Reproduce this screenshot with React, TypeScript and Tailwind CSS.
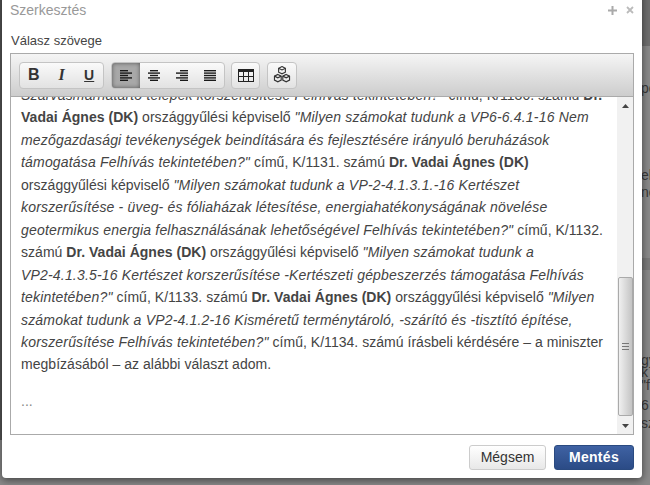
import React from "react";

function AlignIcon({ kind }: { kind: "l" | "c" | "r" | "j" }) {
  const short = { l: [0, 8], c: [2, 8], r: [4, 8], j: [0, 12] };
  const long = { l: [0, 12], c: [0, 12], r: [0, 12], j: [0, 12] };
  const rows = [short, long, short, long, short];
  return (
    <svg width="12" height="11" viewBox="0 0 12 11" fill="#1a1a1a">
      {rows.map((r, i) => (
        <rect key={i} x={r[kind][0]} y={i * 2.4} width={r[kind][1]} height="1.4" />
      ))}
    </svg>
  );
}

const btn = "w-[28px] flex items-center justify-center text-[#333]";
const group = "flex h-[27px] border border-[#c4c4c4] rounded-[4px] bg-gradient-to-b from-[#fafafa] to-[#e2e2e2] overflow-hidden";
const it = "italic text-[14px] tracking-[.18px] leading-none";

function Body() {
  return (
    <div className="mt-[-13px] pl-[10px] text-[14px] leading-[22.45px] text-[#444] whitespace-nowrap tracking-[.03px]">
      <p>
        <i className={it}>Szarvasmarhatartó telepek korszerűsítése Felhívás tekintetében?"</i> című, K/1130. számú <b>Dr.</b><br />
        <b>Vadai Ágnes (DK)</b> országgyűlési képviselő <i className={it}>"Milyen számokat tudunk a VP6-6.4.1-16 Nem</i><br />
        <i className={it}>mezőgazdasági tevékenységek beindítására és fejlesztésére irányuló beruházások</i><br />
        <i className={it}>támogatása Felhívás tekintetében?"</i> című, K/1131. számú <b>Dr. Vadai Ágnes (DK)</b><br />
        országgyűlési képviselő <i className={it}>"Milyen számokat tudunk a VP-2-4.1.3.1.-16 Kertészet</i><br />
        <i className={it}>korszerűsítése - üveg- és fóliaházak létesítése, energiahatékonyságának növelése</i><br />
        <i className={it}>geotermikus energia felhasználásának lehetőségével Felhívás tekintetében?"</i> című, K/1132.<br />
        számú <b>Dr. Vadai Ágnes (DK)</b> országgyűlési képviselő <i className={it}>"Milyen számokat tudunk a</i><br />
        <i className={it}>VP2-4.1.3.5-16 Kertészet korszerűsítése -Kertészeti gépbeszerzés támogatása Felhívás</i><br />
        <i className={it}>tekintetében?"</i> című, K/1133. számú <b>Dr. Vadai Ágnes (DK)</b> országgyűlési képviselő <i className={it}>"Milyen</i><br />
        <i className={it}>számokat tudunk a VP2-4.1.2-16 Kisméretű terménytároló, -szárító és -tisztító építése,</i><br />
        <i className={it}>korszerűsítése Felhívás tekintetében?"</i> című, K/1134. számú írásbeli kérdésére – a miniszter<br />
        megbízásából – az alábbi választ adom.
      </p>
      <p className="mt-[14px] text-[#888]">...</p>
    </div>
  );
}

const bgFragments: [number, string][] = [
  [80, "pe"],
  [167, "eh"],
  [184, "ne"],
  [352, "gy"],
  [364, "k"],
  [377, "\"f"],
  [397, "6"],
  [415, "sz"],
];

export default function App() {
  return (
    <div className="relative w-[650px] h-[485px] overflow-hidden bg-[#8a8a8a] font-['Liberation_Sans',Arial,sans-serif]">
      <div className="absolute left-0 top-0 w-full h-[46px] bg-[#6f6f6f]" />
      <div className="absolute left-0 top-[258px] w-full h-[12px] bg-[#7a7a7a]" />
      {bgFragments.map(([y, t]) => (
        <span key={y} className="absolute left-[641px] text-[14px] leading-[16px] text-[#3a3a3a]" style={{ top: y }}>
          {t}
        </span>
      ))}
      <div className="absolute left-0 top-0 w-[2px] h-[440px] bg-[#555]" />
      <div className="absolute left-[2px] top-[-10px] w-[640px] h-[488px] bg-white rounded-[4px] shadow-[0_2px_8px_rgba(0,0,0,0.55)] flex flex-col">
        <div className="h-[20px] mt-[10px] shrink-0 flex items-center justify-between pl-[8px] pr-[8px]">
          <span className="text-[14px] text-[#999]">Szerkesztés</span>
          <span className="flex items-center gap-[9px] text-[#aaa] leading-none">
            <svg width="9" height="9" stroke="#aaa" strokeWidth="2"><path d="M4.500 0V9M0 4.500H9" /></svg>
            <svg width="8" height="8" stroke="#bbb" strokeWidth="1.800"><path d="M1 1L7 7M7 1L1 7" /></svg>
          </span>
        </div>
        <div className="pl-[9px] text-[13px] text-[#444] mt-[13px] h-[20px] leading-[15px] shrink-0">Válasz szövege</div>
        <div className="ml-[8px] mr-[8px] h-[382px] border border-[#aaa] flex flex-col overflow-hidden shrink-0">
          <div className="relative z-10 h-[43px] shrink-0 bg-gradient-to-b from-[#f5f5f5] to-[#cdcdcd] border-b border-[#aaa] flex items-center pl-[8px]">
            <div className={group + " w-[85px]"}>
              <div className={btn + " font-bold text-[16px]"}>B</div>
              <div className={btn + " font-bold italic text-[16px] font-['Liberation_Serif',serif]"}>I</div>
              <div className={btn + " font-bold underline text-[14px]"}>U</div>
            </div>
            <div className={group + " w-[114px] ml-[7px]"}>
              <div className={btn + " bg-[#a8a8a8] shadow-[inset_0_0_4px_rgba(0,0,0,0.5)]"}><AlignIcon kind="l" /></div>
              <div className={btn}><AlignIcon kind="c" /></div>
              <div className={btn}><AlignIcon kind="r" /></div>
              <div className={btn}><AlignIcon kind="j" /></div>
            </div>
            <div className={group + " w-[29px] ml-[6px] items-center justify-center"}>
              <svg width="16" height="13" viewBox="0 0 16 13">
                <rect x="0" y="0" width="16" height="3" fill="#222" />
                <rect x="0.500" y="0.500" width="15" height="12" fill="none" stroke="#222" />
                <path d="M5.500 3V13M10.500 3V13M0 7.500H16" stroke="#222" />
              </svg>
            </div>
            <div className={group + " w-[30px] ml-[7px] items-center justify-center"}>
              <svg width="18" height="18" viewBox="0 0 16 16" fill="none" stroke="#333">
                <path d="M8 .5l3 1.500v3.500l-3 1.500-3-1.500V2zM4.300 7.500l3 1.500v3.500l-3 1.500-3-1.500V9zM11.700 7.500l3 1.500v3.500l-3 1.500-3-1.500V9z" />
                <path d="M5 2l3 1.500 3-1.500M1.300 9l3 1.500 3-1.500M8.700 9l3 1.500 3-1.500" />
              </svg>
            </div>
          </div>
          <div className="flex-1 min-h-0 flex overflow-hidden">
            <div className="flex-1 min-w-0 overflow-hidden"><Body /></div>
            <div className="w-[16px] shrink-0 bg-[#f1f1f1] flex flex-col items-center">
              <div className="h-[17px] flex items-center justify-center">
                <svg width="7" height="4"><path d="M3.500 0L7 4H0z" fill="#444" /></svg>
              </div>
              <div className="mt-[163px] w-[15px] h-[139px] bg-gradient-to-r from-[#f0f0f0] to-[#c4c4c4] border border-[#aaa] rounded-[2px] flex items-center justify-center">
                <svg width="7" height="7" stroke="#777"><path d="M0 .5H7M0 3.500H7M0 6.500H7" /></svg>
              </div>
              <div className="mt-auto h-[17px] flex items-center justify-center">
                <svg width="7" height="4"><path d="M3.500 4L7 0H0z" fill="#444" /></svg>
              </div>
            </div>
          </div>
        </div>
        <div className="flex-1 flex items-start justify-end gap-[8px] pr-[8px] pt-[10px]">
          <div className="w-[77px] h-[25px] flex items-center justify-center border border-[#ccc] rounded-[3px] bg-gradient-to-b from-white to-[#e8e8e8] text-[14px] text-[#333]">Mégsem</div>
          <div className="w-[80px] h-[25px] flex items-center justify-center border border-[#2a4a80] rounded-[3px] bg-gradient-to-b from-[#3f62a3] to-[#2b4b86] text-[14px] font-bold text-white tracking-[.3px]">Mentés</div>
        </div>
      </div>
    </div>
  );
}
